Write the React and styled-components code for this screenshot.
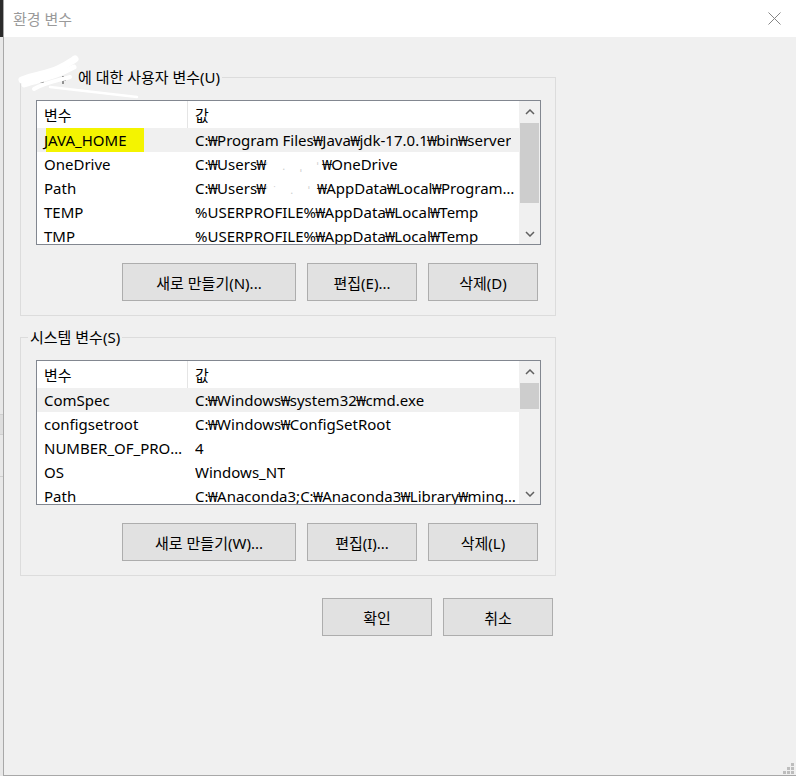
import React from "react";
import styled, { createGlobalStyle } from "styled-components";

const GlobalStyle = createGlobalStyle`
  html, body {
    margin: 0;
    padding: 0;
    background: #f0f0f0;
  }
  body {
    font-family: "Noto Sans", "Noto Sans CJK KR", sans-serif;
    font-size: 15px;
    color: #000;
  }
  * {
    box-sizing: border-box;
  }
`;

const Screen = styled.div`
  display: flex;
  width: 796px;
  height: 776px;
  overflow: hidden;
`;

// sliver of the window behind the dialog
const BackWindow = styled.div`
  width: 3px;
  flex-shrink: 0;
  background: linear-gradient(
    to bottom,
    #2b2b2b 0 37px,
    #e8e8e8 37px 414px,
    #cfcfcf 414px 415px,
    #dddddd 415px 434px,
    #cfcfcf 434px 435px,
    #e8e8e8 435px 476px,
    #cfcfcf 476px 477px,
    #e8e8e8 477px
  );
`;

const Dialog = styled.div`
  flex: 1;
  display: flex;
  flex-direction: column;
  background: #f0f0f0;
  border-left: 1px solid #a8a8a8;
  border-bottom: 1px solid #a8a8a8;
`;

const TitleBar = styled.div`
  height: 37px;
  flex-shrink: 0;
  display: flex;
  align-items: center;
  justify-content: space-between;
  padding: 0 15px 0 9px;
  background: #fff;
  color: #9a9a9a;
  font-size: 15px;
`;

const Body = styled.div`
  padding: 30px 0 0 16px;
`;

const Group = styled.fieldset`
  width: 536px;
  margin: 0;
  border: 1px solid #dcdcdc;
  padding: 13px 14px 14px 15px;

  & + & {
    margin-top: 11px;
  }
`;

const Legend = styled.legend`
  padding: 0 2px;
  margin-left: -8px;
  line-height: 20px;
  white-space: nowrap;
`;

const Scribble = styled.span`
  display: inline-block;
  width: 48px;
  height: 20px;
  vertical-align: top;

  svg {
    overflow: visible;
    display: block;
  }
`;

const ListBox = styled.div`
  height: 145px;
  display: flex;
  border: 1px solid #828790;
  background: #fff;
`;

const Table = styled.div`
  flex: 1;
  min-width: 0;
  overflow: hidden;
`;

const Row = styled.div`
  display: grid;
  grid-template-columns: 151px 1fr;
  height: ${(p) => (p.$head ? 27 : 24)}px;
  align-items: center;
  background: ${(p) => (p.$selected ? "#f0f0f0" : "#fff")};
`;

const Cell = styled.div`
  height: 100%;
  display: flex;
  align-items: center;
  padding: 0 2px 0 7px;
  min-width: 0;
  white-space: nowrap;
  overflow: hidden;
  border-right: ${(p) => (p.$divider ? "1px solid #e5e5e5" : "none")};
`;

const Text = styled.span`
  overflow: hidden;
  text-overflow: ellipsis;
  white-space: nowrap;
`;

const Won = styled.span`
  margin: 0 -0.75px;
`;

const Marker = styled.span`
  display: inline-block;
  line-height: 24px;
  padding-right: 17px;
  background: linear-gradient(to right, transparent 2px, #f4f400 2px);
`;

const Smudge = styled.span`
  display: inline-block;
  width: ${(p) => p.$w}px;
  color: #cfcfcf;
  letter-spacing: 6px;
  font-size: 11px;
`;

const ScrollBar = styled.div`
  width: 21px;
  flex-shrink: 0;
  display: flex;
  flex-direction: column;
  background: #f0f0f0;
`;

const Arrow = styled.div`
  height: 21px;
  display: flex;
  align-items: center;
  justify-content: center;
  flex-shrink: 0;
`;

const Track = styled.div`
  flex: 1;
  padding: 1px 1px 0;
`;

const Thumb = styled.div`
  height: ${(p) => p.$h}px;
  background: #cdcdcd;
`;

const ButtonRow = styled.div`
  display: flex;
  justify-content: flex-end;
  gap: 11px;
  margin-top: 18px;
  padding-right: 3px;
`;

const Button = styled.button`
  width: ${(p) => p.$w}px;
  height: 38px;
  padding: 0;
  background: #e1e1e1;
  border: 1px solid #adadad;
  font: inherit;
  font-size: 15px;
  color: #000;
`;

const Actions = styled(ButtonRow)`
  width: 536px;
  margin-top: 22px;
`;

const Spacer = styled.div`
  flex: 1;
`;

const GripRow = styled.div`
  display: flex;
  justify-content: flex-end;
  padding: 0 2px 1px 0;
`;

// Korean Windows shows the backslash as a won sign
const path = (s) =>
  s.split("₩").flatMap((part, i) => (i === 0 ? [part] : [<Won key={i}>₩</Won>, part]));

const Chevron = ({ down }) => (
  <svg width="10" height="6" viewBox="0 0 10 6">
    <path
      d={down ? "M1 1 L5 5 L9 1" : "M1 5 L5 1 L9 5"}
      fill="none"
      stroke="#606060"
      strokeWidth="1.5"
    />
  </svg>
);

const VarList = ({ rows, thumb }) => (
  <ListBox>
    <Table>
      <Row $head>
        <Cell $divider>변수</Cell>
        <Cell>값</Cell>
      </Row>
      {rows.map((r, i) => (
        <Row key={i} $selected={i === 0}>
          <Cell>{r.name}</Cell>
          <Cell>
            <Text>{r.value}</Text>
          </Cell>
        </Row>
      ))}
    </Table>
    <ScrollBar>
      <Arrow>
        <Chevron />
      </Arrow>
      <Track>
        <Thumb $h={thumb} />
      </Track>
      <Arrow>
        <Chevron down />
      </Arrow>
    </ScrollBar>
  </ListBox>
);

const userRows = [
  { name: <Marker>JAVA_HOME</Marker>, value: path("C:₩Program Files₩Java₩jdk-17.0.1₩bin₩server") },
  {
    name: "OneDrive",
    value: (
      <>
        {path("C:₩Users₩")}
        <Smudge $w={57}>ˈ . ˌ ˈ˙</Smudge>
        {path("₩OneDrive")}
      </>
    ),
  },
  {
    name: "Path",
    value: (
      <>
        {path("C:₩Users₩")}
        <Smudge $w={52}>ˈ˙ . ˈ</Smudge>
        {path("₩AppData₩Local₩Programs₩Python")}
      </>
    ),
  },
  { name: "TEMP", value: path("%USERPROFILE%₩AppData₩Local₩Temp") },
  { name: "TMP", value: path("%USERPROFILE%₩AppData₩Local₩Temp") },
];

const systemRows = [
  { name: "ComSpec", value: path("C:₩Windows₩system32₩cmd.exe") },
  { name: "configsetroot", value: path("C:₩Windows₩ConfigSetRoot") },
  { name: <Text>NUMBER_OF_PROCESSORS</Text>, value: "4" },
  { name: "OS", value: "Windows_NT" },
  { name: "Path", value: path("C:₩Anaconda3;C:₩Anaconda3₩Library₩mingw-w64₩bin") },
];

export default function App() {
  return (
    <Screen>
      <GlobalStyle />
      <BackWindow />
      <Dialog>
        <TitleBar>
          <span>환경 변수</span>
          <svg width="13" height="13" viewBox="0 0 13 13">
            <path d="M0.5 0.5 L12.5 12.5 M12.5 0.5 L0.5 12.5" stroke="#858585" strokeWidth="1" />
          </svg>
        </TitleBar>
        <Body>
          <Group>
            <Legend>
              <Scribble>
                <svg width="48" height="20" viewBox="0 0 48 20">
                  <path d="M7 15 L14 15" stroke="#333" strokeWidth="1" />
                  <path d="M33 9 L33 17 M33 13 L36 13" stroke="#333" strokeWidth="1" />
                  <path
                    d="M-8 13 C4 8 18 7 28 2 S42 -6 45 -8"
                    stroke="#fff"
                    strokeWidth="7"
                    strokeLinecap="round"
                    fill="none"
                  />
                  <path
                    d="M-6 18 C8 13 22 11 36 4 L44 0"
                    stroke="#fff"
                    strokeWidth="5"
                    strokeLinecap="round"
                    fill="none"
                  />
                  <path
                    d="M4 22 C14 16 26 14 40 10"
                    stroke="#fff"
                    strokeWidth="4"
                    strokeLinecap="round"
                    fill="none"
                  />
                  <path
                    d="M20 20 L107 30"
                    stroke="#fff"
                    strokeWidth="2.5"
                    strokeLinecap="round"
                    fill="none"
                  />
                </svg>
              </Scribble>
              에 대한 사용자 변수(U)
            </Legend>
            <VarList rows={userRows} thumb={80} />
            <ButtonRow>
              <Button $w={174}>새로 만들기(N)...</Button>
              <Button $w={110}>편집(E)...</Button>
              <Button $w={110}>삭제(D)</Button>
            </ButtonRow>
          </Group>
          <Group>
            <Legend>시스템 변수(S)</Legend>
            <VarList rows={systemRows} thumb={26} />
            <ButtonRow>
              <Button $w={174}>새로 만들기(W)...</Button>
              <Button $w={110}>편집(I)...</Button>
              <Button $w={110}>삭제(L)</Button>
            </ButtonRow>
          </Group>
          <Actions>
            <Button $w={110}>확인</Button>
            <Button $w={110}>취소</Button>
          </Actions>
        </Body>
        <Spacer />
        <GripRow>
          <svg width="11" height="11" viewBox="0 0 11 11">
            <g fill="#bdbdbd">
              <rect x="8" y="0" width="3" height="3" />
              <rect x="4" y="4" width="3" height="3" />
              <rect x="8" y="4" width="3" height="3" />
              <rect x="0" y="8" width="3" height="3" />
              <rect x="4" y="8" width="3" height="3" />
              <rect x="8" y="8" width="3" height="3" />
            </g>
          </svg>
        </GripRow>
      </Dialog>
    </Screen>
  );
}
